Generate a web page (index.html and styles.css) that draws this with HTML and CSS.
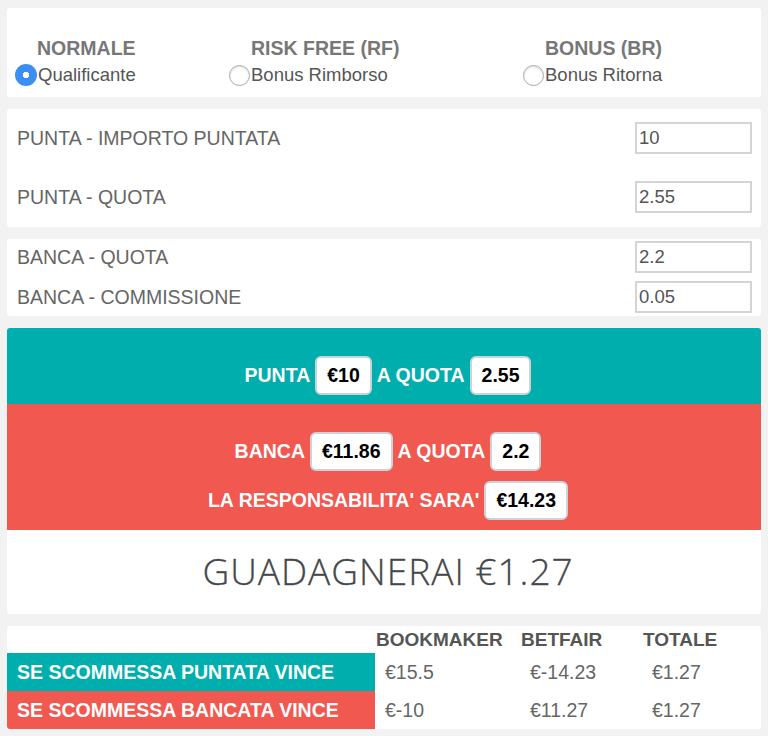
FILE: index.html
```html
<!DOCTYPE html>
<html lang="it">

<head>
    <meta charset="UTF-8">
    <meta name="viewport" content="width=device-width, initial-scale=1.0">
    <title>Calcolatore Matched Betting</title>
    <link rel="stylesheet" href="styles.css">
</head>

<body>

    <div class="container">
        <div class="card modes">
            <div class="mode mode-normal">
                <div class="mode-title">NORMALE</div>
                <label class="radio-line"><span class="radio checked"></span>Qualificante</label>
            </div>
            <div class="mode mode-rf">
                <div class="mode-title">RISK FREE (RF)</div>
                <label class="radio-line"><span class="radio"></span>Bonus Rimborso</label>
            </div>
            <div class="mode mode-br">
                <div class="mode-title">BONUS (BR)</div>
                <label class="radio-line"><span class="radio"></span>Bonus Ritorna</label>
            </div>
        </div>

        <div class="card fields fields-punta">
            <div class="field">
                <span class="field-label">PUNTA - IMPORTO PUNTATA</span>
                <input class="field-input" type="text" value="10">
            </div>
            <div class="field">
                <span class="field-label">PUNTA - QUOTA</span>
                <input class="field-input" type="text" value="2.55">
            </div>
        </div>

        <div class="card fields fields-banca">
            <div class="field">
                <span class="field-label">BANCA - QUOTA</span>
                <input class="field-input" type="text" value="2.2">
            </div>
            <div class="field">
                <span class="field-label">BANCA - COMMISSIONE</span>
                <input class="field-input" type="text" value="0.05">
            </div>
        </div>

        <div class="card result">
            <div class="band band-punta">
                <div class="band-line">PUNTA <span class="pill">€10</span> A QUOTA <span class="pill">2.55</span></div>
            </div>
            <div class="band band-banca">
                <div class="band-line">BANCA <span class="pill">€11.86</span> A QUOTA <span class="pill">2.2</span></div>
                <div class="band-line">LA RESPONSABILITA' SARA' <span class="pill">€14.23</span></div>
            </div>
            <div class="profit">GUADAGNERAI €1.27</div>
        </div>

        <div class="card summary">
            <div class="summary-row summary-head">
                <div></div>
                <div>BOOKMAKER</div>
                <div>BETFAIR</div>
                <div>TOTALE</div>
            </div>
            <div class="summary-row">
                <div class="summary-label label-punta">SE SCOMMESSA PUNTATA VINCE</div>
                <div class="summary-value">€15.5</div>
                <div class="summary-value">€-14.23</div>
                <div class="summary-value">€1.27</div>
            </div>
            <div class="summary-row">
                <div class="summary-label label-banca">SE SCOMMESSA BANCATA VINCE</div>
                <div class="summary-value">€-10</div>
                <div class="summary-value">€11.27</div>
                <div class="summary-value">€1.27</div>
            </div>
        </div>
    </div>

</body>

</html>
```

FILE: styles.css
```css
body {
    font-family: 'Liberation Sans', Arial, sans-serif;
    background-color: #f1f2f1;
    margin: 0;
    padding: 0;
    color: #666;
}

.container {
    padding: 8px 7px;
}

.card {
    background-color: white;
    border-radius: 3px;
    margin-bottom: 12px;
    overflow: hidden;
}

/* tipo di scommessa */

.modes {
    display: flex;
    padding: 30px 0 10px 8px;
    height: 49px;
}

.mode-normal {
    width: 214px;
}

.mode-rf {
    width: 294px;
}

.mode-title {
    font-size: 19.5px;
    font-weight: bold;
    color: #777;
    line-height: 20px;
    padding-left: 22px;
}

.radio-line {
    display: flex;
    align-items: center;
    font-size: 18.5px;
    color: #555;
    margin-top: 6px;
    line-height: 22px;
}

.radio {
    width: 21px;
    height: 21px;
    border-radius: 50%;
    border: 1px solid #aaa;
    box-sizing: border-box;
    margin-right: 1px;
    box-shadow: inset 0 1px 2px rgba(0, 0, 0, 0.15);
    background: white;
}

.radio.checked {
    border: none;
    background: radial-gradient(circle, white 0, white 3px, #3b8ff2 3.5px);
    box-shadow: none;
    width: 22px;
    height: 22px;
    margin-right: 1px;
}

/* campi */

.fields {
    padding: 13px 9px 14px 10px;
    display: flex;
    flex-direction: column;
}

.fields-punta {
    gap: 27px;
}

.fields-banca {
    padding-top: 2px;
    padding-bottom: 3px;
    gap: 8px;
}

.field {
    display: flex;
    align-items: center;
    justify-content: space-between;
}

.field-label {
    font-size: 19.5px;
    color: #666;
}

.field-input {
    width: 117px;
    height: 32px;
    box-sizing: border-box;
    border: 2px solid #d4d4d4;
    padding: 0 2px;
    font-family: 'Liberation Sans', Arial, sans-serif;
    font-size: 18.5px;
    color: #555;
    outline: none;
}

/* risultato */

.band {
    color: white;
    font-size: 19.5px;
    font-weight: bold;
    padding: 28px 0 9px 8px;
    display: flex;
    flex-direction: column;
    gap: 10px;
}

.band-punta {
    background-color: #00aeae;
}

.band-banca {
    background-color: #f1584f;
    padding-bottom: 10px;
}

.band-line {
    height: 39px;
    display: flex;
    align-items: center;
    justify-content: center;
    gap: 5px;
}

.pill {
    display: block;
    background-color: white;
    color: black;
    border: 2px solid #c9d3da;
    border-radius: 6px;
    padding: 0 10px;
    line-height: 35px;
}

.profit {
    font-family: 'Open Sans', sans-serif;
    font-weight: 300;
    font-size: 37px;
    color: #45484b;
    text-align: center;
    letter-spacing: 1px;
    padding: 19px 0 21px 8px;
    line-height: 44px;
    -webkit-text-stroke: 0.3px #45484b;
}

/* riepilogo */

.summary-row {
    display: grid;
    grid-template-columns: 368px 145px 122px 1fr;
    align-items: center;
    height: 38px;
    font-size: 19.5px;
}

.summary-head {
    height: 27px;
    font-size: 19px;
    font-weight: bold;
    color: #555;
}

.summary-head div {
    padding-left: 1px;
}

.summary-label {
    color: white;
    font-weight: bold;
    height: 100%;
    display: flex;
    align-items: center;
    padding-left: 10px;
}

.label-punta {
    background-color: #00aeae;
}

.label-banca {
    background-color: #f1584f;
}

.summary-value {
    padding-left: 10px;
    color: #666;
}
```
